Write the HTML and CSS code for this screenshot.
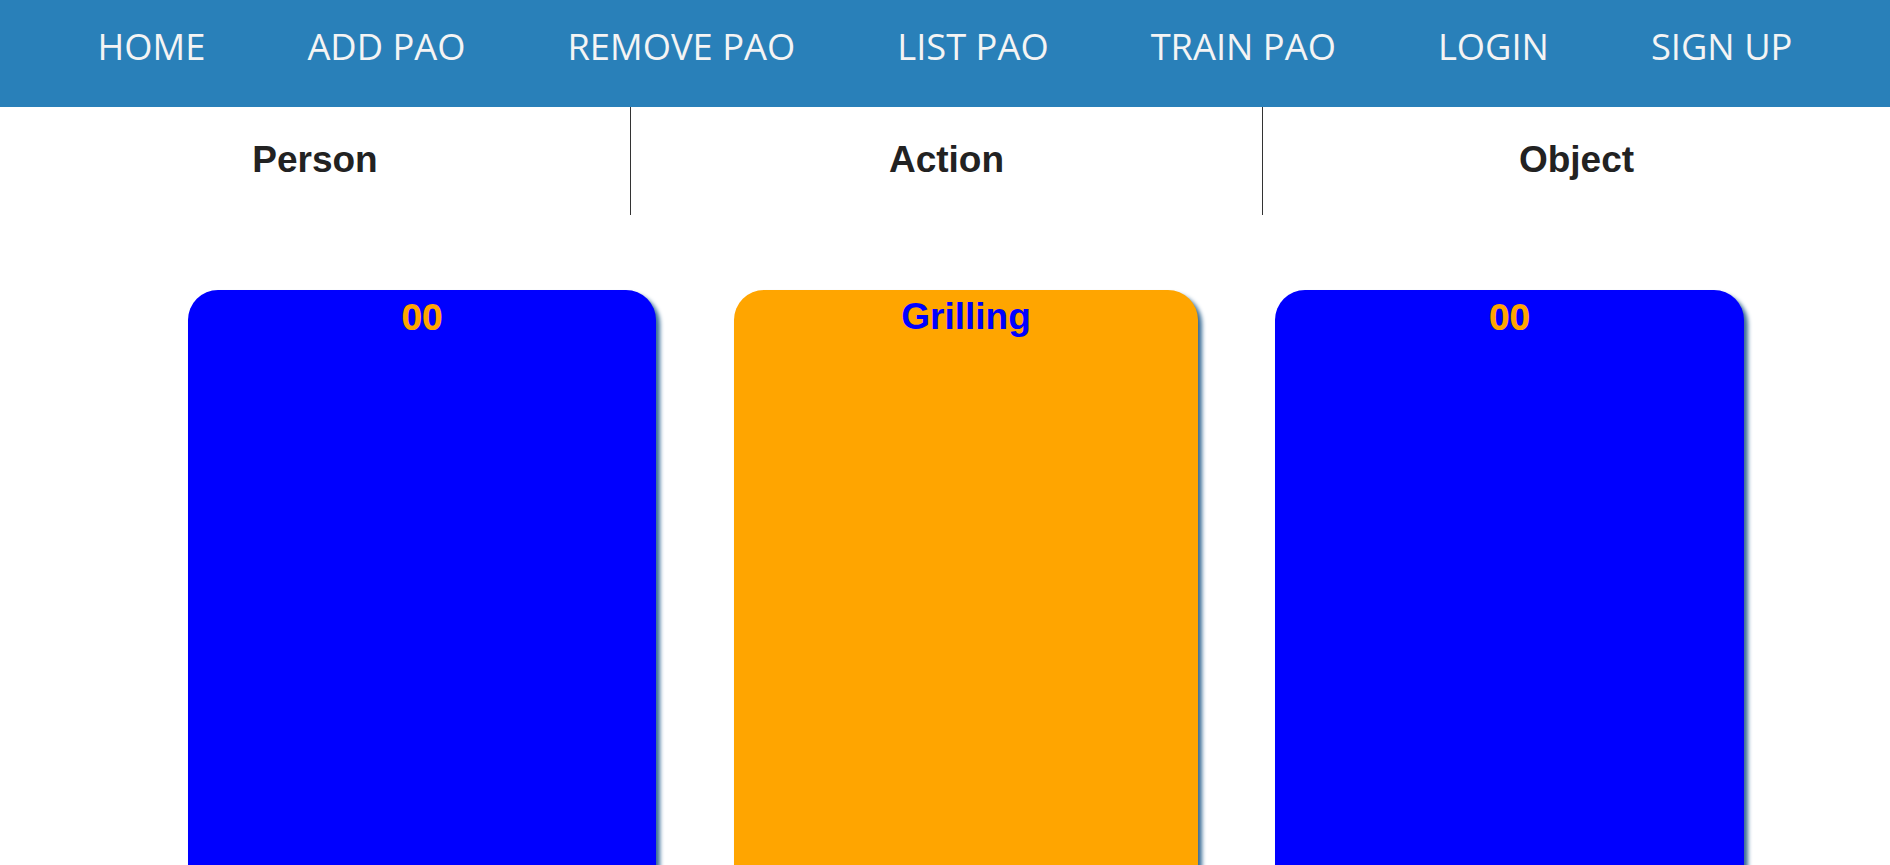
FILE: index.html
```html
<!DOCTYPE html>
<html lang="en">
<head>
<meta charset="utf-8">
<title>PAO</title>
<link rel="stylesheet" href="styles.css">
</head>
<body>
<nav class="nav">
  <ul class="nav-list">
    <li class="nav-item">HOME</li>
    <li class="nav-item">ADD PAO</li>
    <li class="nav-item">REMOVE PAO</li>
    <li class="nav-item">LIST PAO</li>
    <li class="nav-item">TRAIN PAO</li>
    <li class="nav-item">LOGIN</li>
    <li class="nav-item">SIGN UP</li>
  </ul>
</nav>
<div class="headers">
  <div class="header-cell divided">Person</div>
  <div class="header-cell divided">Action</div>
  <div class="header-cell">Object</div>
</div>
<div class="cards">
  <div class="card card-blue card-1"><h2 class="card-title title-num">00</h2></div>
  <div class="card card-orange card-2"><h2 class="card-title title-word">Grilling</h2></div>
  <div class="card card-blue card-3"><h2 class="card-title title-num">00</h2></div>
</div>
</body>
</html>
```

FILE: styles.css
```css
html, body {
  margin: 0;
  padding: 0;
  background: #ffffff;
}
body {
  width: 1890px;
  overflow: hidden;
}
.nav {
  background: #2980b9;
  height: 107px;
  box-sizing: border-box;
  padding-top: 21px;
}
.nav-list {
  list-style: none;
  margin: 0;
  padding: 0;
  display: flex;
  justify-content: center;
  gap: 102px;
}
.nav-item {
  font-family: "Open Sans", "Segoe UI", sans-serif;
  font-weight: 400;
  font-size: 36.3px;
  line-height: 50px;
  color: #f4f4f4;
  white-space: nowrap;
}
.headers {
  display: grid;
  grid-template-columns: 631px 632px 1fr;
  height: 108px;
}
.header-cell {
  display: flex;
  align-items: center;
  justify-content: center;
  padding-bottom: 3px;
  box-sizing: border-box;
  font-family: "Liberation Sans", Arial, sans-serif;
  font-weight: 700;
  font-size: 37px;
  line-height: 42px;
  color: #222222;
}
.divided {
  border-right: 1px solid #333333;
}
.cards {
  display: flex;
  margin-top: 75px;
  padding-left: 188px;
}
.card {
  height: 620px;
  border-radius: 30px;
  box-sizing: border-box;
  padding-top: 7px;
  box-shadow: 4px 4px 4px #3b6d96;
  flex: none;
}
.card-1 { width: 468px; }
.card-2 { width: 464px; margin-left: 78px; }
.card-3 { width: 469px; margin-left: 77px; }
.card-blue { background: #0000ff; }
.card-orange { background: #ffa500; }
.card-title {
  margin: 0;
  text-align: center;
  line-height: 40px;
  font-weight: 700;
}
.title-num {
  font-family: "Open Sans", "Segoe UI", sans-serif;
  font-size: 36px;
  color: #ffa500;
}
.title-word {
  font-family: "Liberation Sans", Arial, sans-serif;
  font-size: 37px;
  color: #0000ff;
}
```
